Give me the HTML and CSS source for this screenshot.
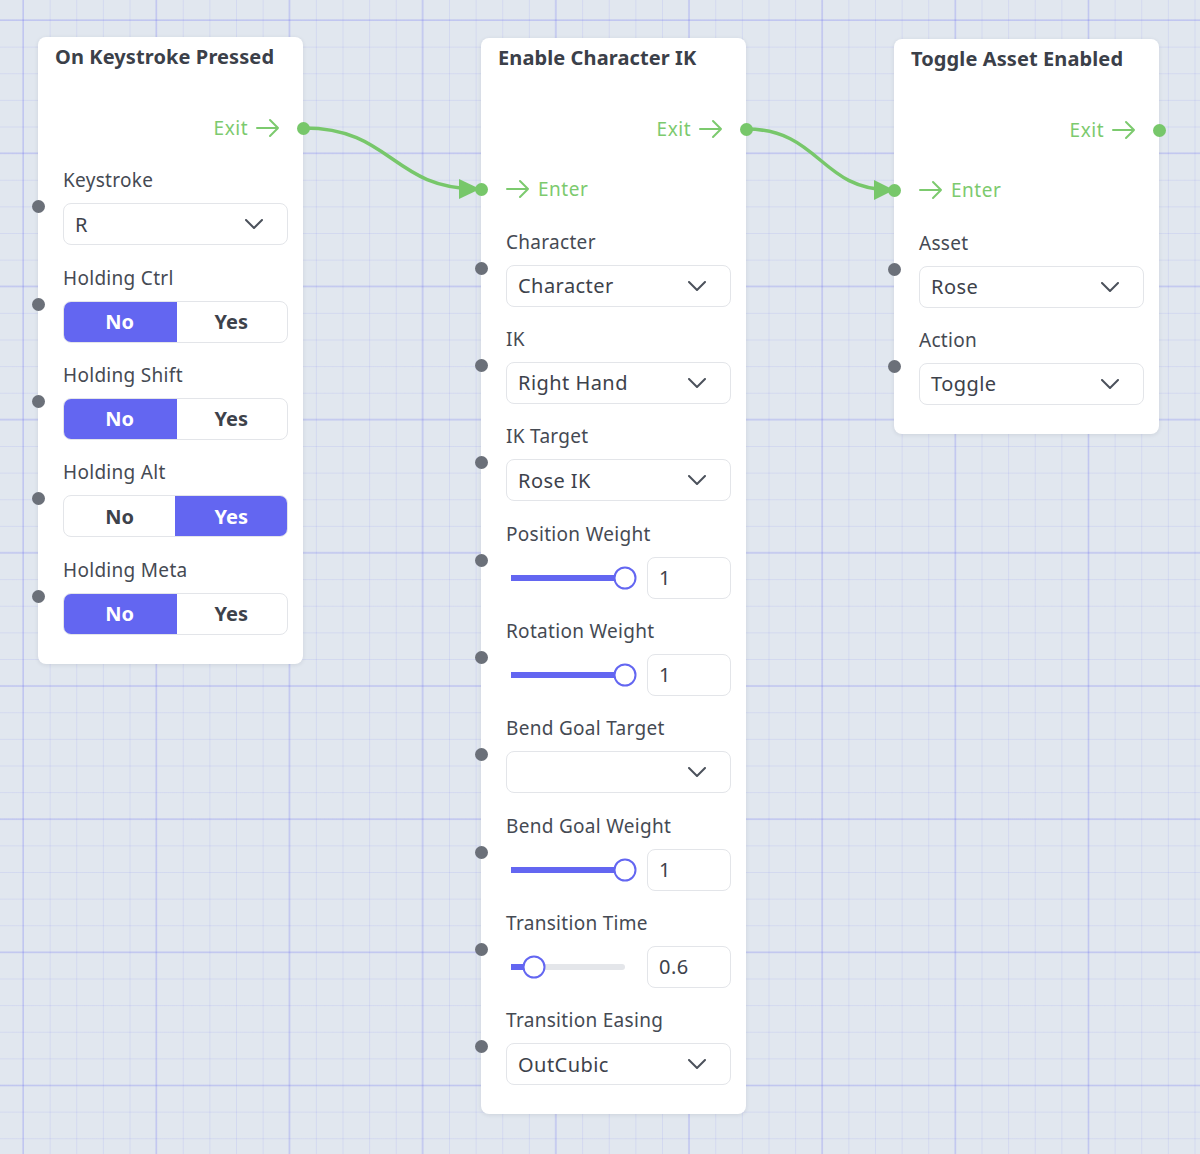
FILE: index.html
```html
<!DOCTYPE html>
<html lang="en">
<head>
<meta charset="utf-8">
<title>Flow editor</title>
<link rel="stylesheet" href="styles.css">
</head>
<body>
<div class="canvas">
  <svg class="wires" width="1200" height="1154" viewBox="0 0 1200 1154">
    <path class="wire" d="M304 128 C 392 128, 392 189, 478 189"/>
    <polygon class="wire-head" points="459,179 480,189 459,199"/>
    <path class="wire" d="M746 129 C 820 129, 820 190, 891 190"/>
    <polygon class="wire-head" points="874,180 894,190 874,200"/>
  </svg>

  <div class="node node-a">
    <div class="node-title">On Keystroke Pressed</div>
    <div class="node-body">
      <div class="flow-row exit">
        <span class="flow-text">Exit</span>
        <svg class="arrow" viewBox="0 0 24 24"><path d="M1 12h21M14 4l8 8-8 8"/></svg>
        <span class="dot dot-out"></span>
      </div>
      <div class="field">
        <span class="dot dot-in"></span>
        <div class="label">Keystroke</div>
        <div class="select"><span>R</span><svg class="chev" viewBox="0 0 18 10"><path d="M1 1l8 8 8-8"/></svg></div>
      </div>
      <div class="field">
        <span class="dot dot-in"></span>
        <div class="label">Holding Ctrl</div>
        <div class="toggle"><span class="opt on">No</span><span class="opt">Yes</span></div>
      </div>
      <div class="field">
        <span class="dot dot-in"></span>
        <div class="label">Holding Shift</div>
        <div class="toggle"><span class="opt on">No</span><span class="opt">Yes</span></div>
      </div>
      <div class="field">
        <span class="dot dot-in"></span>
        <div class="label">Holding Alt</div>
        <div class="toggle"><span class="opt">No</span><span class="opt on">Yes</span></div>
      </div>
      <div class="field">
        <span class="dot dot-in"></span>
        <div class="label">Holding Meta</div>
        <div class="toggle"><span class="opt on">No</span><span class="opt">Yes</span></div>
      </div>
    </div>
  </div>

  <div class="node node-b">
    <div class="node-title">Enable Character IK</div>
    <div class="node-body">
      <div class="flow-row exit">
        <span class="flow-text">Exit</span>
        <svg class="arrow" viewBox="0 0 24 24"><path d="M1 12h21M14 4l8 8-8 8"/></svg>
        <span class="dot dot-out"></span>
      </div>
      <div class="flow-row enter">
        <span class="dot dot-enter"></span>
        <svg class="arrow" viewBox="0 0 24 24"><path d="M1 12h21M14 4l8 8-8 8"/></svg>
        <span class="flow-text">Enter</span>
      </div>
      <div class="field">
        <span class="dot dot-in"></span>
        <div class="label">Character</div>
        <div class="select"><span>Character</span><svg class="chev" viewBox="0 0 18 10"><path d="M1 1l8 8 8-8"/></svg></div>
      </div>
      <div class="field">
        <span class="dot dot-in"></span>
        <div class="label">IK</div>
        <div class="select"><span>Right Hand</span><svg class="chev" viewBox="0 0 18 10"><path d="M1 1l8 8 8-8"/></svg></div>
      </div>
      <div class="field">
        <span class="dot dot-in"></span>
        <div class="label">IK Target</div>
        <div class="select"><span>Rose IK</span><svg class="chev" viewBox="0 0 18 10"><path d="M1 1l8 8 8-8"/></svg></div>
      </div>
      <div class="field">
        <span class="dot dot-in"></span>
        <div class="label">Position Weight</div>
        <div class="slider-row">
          <div class="slider"><div class="track"><div class="fill" style="width:100%"></div><div class="knob" style="left:100%"></div></div></div>
          <div class="num">1</div>
        </div>
      </div>
      <div class="field">
        <span class="dot dot-in"></span>
        <div class="label">Rotation Weight</div>
        <div class="slider-row">
          <div class="slider"><div class="track"><div class="fill" style="width:100%"></div><div class="knob" style="left:100%"></div></div></div>
          <div class="num">1</div>
        </div>
      </div>
      <div class="field">
        <span class="dot dot-in"></span>
        <div class="label">Bend Goal Target</div>
        <div class="select"><span></span><svg class="chev" viewBox="0 0 18 10"><path d="M1 1l8 8 8-8"/></svg></div>
      </div>
      <div class="field">
        <span class="dot dot-in"></span>
        <div class="label">Bend Goal Weight</div>
        <div class="slider-row">
          <div class="slider"><div class="track"><div class="fill" style="width:100%"></div><div class="knob" style="left:100%"></div></div></div>
          <div class="num">1</div>
        </div>
      </div>
      <div class="field">
        <span class="dot dot-in"></span>
        <div class="label">Transition Time</div>
        <div class="slider-row">
          <div class="slider"><div class="track"><div class="fill" style="width:20%"></div><div class="knob" style="left:20%"></div></div></div>
          <div class="num">0.6</div>
        </div>
      </div>
      <div class="field">
        <span class="dot dot-in"></span>
        <div class="label">Transition Easing</div>
        <div class="select"><span>OutCubic</span><svg class="chev" viewBox="0 0 18 10"><path d="M1 1l8 8 8-8"/></svg></div>
      </div>
    </div>
  </div>

  <div class="node node-c">
    <div class="node-title">Toggle Asset Enabled</div>
    <div class="node-body">
      <div class="flow-row exit">
        <span class="flow-text">Exit</span>
        <svg class="arrow" viewBox="0 0 24 24"><path d="M1 12h21M14 4l8 8-8 8"/></svg>
        <span class="dot dot-out"></span>
      </div>
      <div class="flow-row enter">
        <span class="dot dot-enter"></span>
        <svg class="arrow" viewBox="0 0 24 24"><path d="M1 12h21M14 4l8 8-8 8"/></svg>
        <span class="flow-text">Enter</span>
      </div>
      <div class="field">
        <span class="dot dot-in"></span>
        <div class="label">Asset</div>
        <div class="select"><span>Rose</span><svg class="chev" viewBox="0 0 18 10"><path d="M1 1l8 8 8-8"/></svg></div>
      </div>
      <div class="field">
        <span class="dot dot-in"></span>
        <div class="label">Action</div>
        <div class="select"><span>Toggle</span><svg class="chev" viewBox="0 0 18 10"><path d="M1 1l8 8 8-8"/></svg></div>
      </div>
    </div>
  </div>
</div>
</body>
</html>
```

FILE: styles.css
```css
* { box-sizing: border-box; }

html, body {
  margin: 0;
  padding: 0;
}

body {
  font-family: "Noto Sans", "Open Sans", sans-serif;
  color: #374151;
}

.canvas {
  position: relative;
  width: 1200px;
  height: 1154px;
  overflow: hidden;
  background-color: #e1e7ef;
  background-image:
    linear-gradient(to right, rgba(99, 102, 241, 0.16) 2px, transparent 2px),
    linear-gradient(to bottom, rgba(99, 102, 241, 0.16) 2px, transparent 2px),
    linear-gradient(to right, rgba(99, 102, 241, 0.11) 1px, transparent 1px),
    linear-gradient(to bottom, rgba(99, 102, 241, 0.11) 1px, transparent 1px);
  background-size: 133.2px 133.2px, 133.2px 133.2px, 26.64px 26.64px, 26.64px 26.64px;
  background-position: 22px 19px, 22px 19px, 23px 20px, 23px 20px;
}

.wires {
  position: absolute;
  left: 0;
  top: 0;
}

.wire {
  fill: none;
  stroke: #77c76a;
  stroke-width: 3.5;
  stroke-linecap: round;
}

.wire-head {
  fill: #77c76a;
}

.node {
  position: absolute;
  width: 265px;
  background: #fff;
  border-radius: 8px;
  box-shadow: 0 1px 4px rgba(30, 41, 59, 0.1);
  padding-bottom: 29px;
}

.node-a { left: 38px; top: 37px; }
.node-b { left: 481px; top: 38px; }
.node-c { left: 894px; top: 39px; }

.node-title {
  padding: 6px 17px 0;
  height: 34px;
  font-size: 20px;
  line-height: 28px;
  font-weight: 700;
  letter-spacing: 0.1px;
  color: #3b4049;
  white-space: nowrap;
}

.node-body {
  display: flex;
  flex-direction: column;
  gap: 20.33px;
  padding: 37px 15px 0 25px;
}

.flow-row {
  position: relative;
  display: flex;
  align-items: center;
  height: 40px;
  color: #7cca6e;
  font-size: 19px;
  letter-spacing: 0.5px;
}

.flow-row.exit {
  justify-content: flex-end;
  gap: 8px;
  padding-right: 8px;
}

.flow-row.enter {
  gap: 8px;
}

.arrow {
  width: 24px;
  height: 24px;
  fill: none;
  stroke: #7cca6e;
  stroke-width: 2;
  stroke-linecap: round;
  stroke-linejoin: round;
}

.dot {
  position: absolute;
  width: 13px;
  height: 13px;
  border-radius: 50%;
  top: 50%;
  margin-top: -6.5px;
}

.dot-out {
  right: -21.5px;
  background: #77c76a;
}

.dot-enter {
  left: -31.5px;
  background: #77c76a;
}

.dot-in {
  left: -31.5px;
  background: #6b7079;
}

.field {
  position: relative;
  display: flex;
  flex-direction: column;
  gap: 11px;
}

.label {
  height: 24px;
  font-size: 19px;
  line-height: 24px;
  letter-spacing: 0.3px;
  color: #454a53;
  white-space: nowrap;
}

.select {
  display: flex;
  align-items: center;
  justify-content: space-between;
  height: 42px;
  padding: 0 24px 0 11px;
  border: 1px solid #e3e5e9;
  border-radius: 8px;
  font-size: 20px;
  letter-spacing: 0.45px;
  color: #3d424b;
}

.chev {
  width: 18px;
  height: 10px;
  fill: none;
  stroke: #4b515b;
  stroke-width: 2;
  stroke-linecap: round;
  stroke-linejoin: round;
}

.toggle {
  display: grid;
  grid-template-columns: 1fr 1fr;
  height: 42px;
  border: 1px solid #e3e5e9;
  border-radius: 8px;
  overflow: hidden;
}

.opt {
  display: flex;
  align-items: center;
  justify-content: center;
  font-size: 20px;
  font-weight: 700;
  color: #3d424b;
}

.opt.on {
  margin: -1px;
  background: #6366f1;
  color: #fff;
}

.slider-row {
  display: flex;
  align-items: center;
  gap: 10px;
  height: 42px;
}

.slider {
  flex: 1;
  display: flex;
  align-items: center;
  padding: 0 12px 0 5px;
}

.track {
  position: relative;
  flex: 1;
  height: 6px;
  border-radius: 3px;
  background: #e4e6ea;
}

.fill {
  height: 100%;
  background: #6366f1;
}

.knob {
  position: absolute;
  top: 50%;
  width: 23px;
  height: 23px;
  border: 2.5px solid #6366f1;
  border-radius: 50%;
  background: #fff;
  transform: translate(-50%, -50%);
}

.num {
  width: 84px;
  height: 42px;
  display: flex;
  align-items: center;
  padding-left: 11px;
  border: 1px solid #e3e5e9;
  border-radius: 8px;
  font-size: 20px;
  letter-spacing: 0.45px;
  color: #3d424b;
}
```
